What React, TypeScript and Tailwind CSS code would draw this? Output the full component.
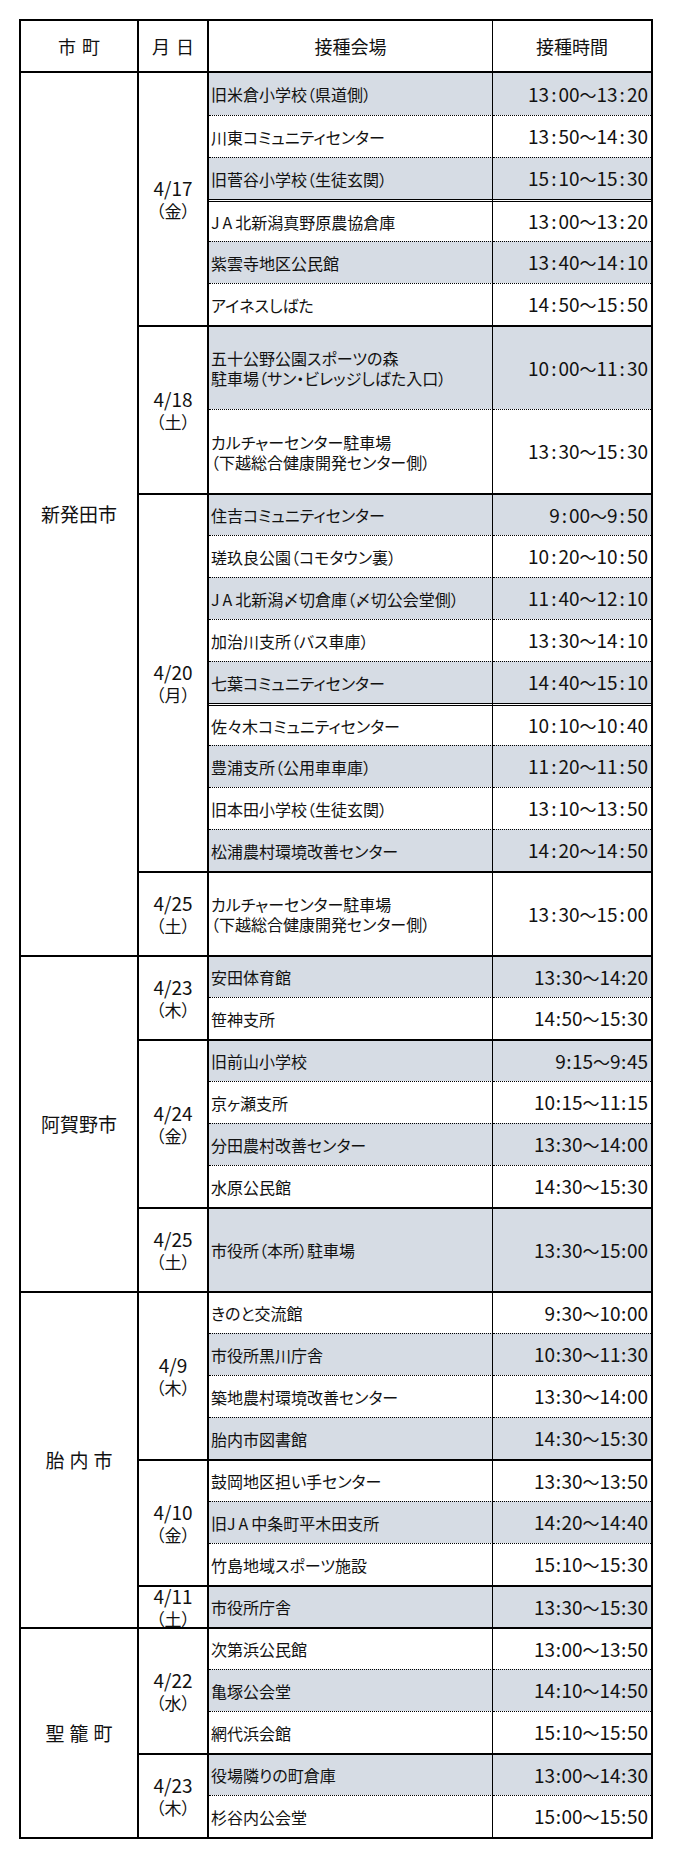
import React, { Fragment } from 'react';

type Row = { v: string[]; t: string; g: boolean; dbl?: boolean; span?: number };
type DateGroup = { d: string; w: string; rows: Row[] };
type City = { name: string[]; wide: boolean; dates: DateGroup[] };

const SPAN: Record<number, string> = {
  1: 'row-span-1',
  2: 'row-span-2',
  3: 'row-span-3',
  4: 'row-span-4',
  5: 'row-span-5',
  6: 'row-span-6',
  7: 'row-span-7',
  8: 'row-span-8',
  9: 'row-span-9',
  21: 'row-span-21',
};

const cities: City[] = [
  {
    name: ['新発田市'],
    wide: true,
    dates: [
      {
        d: '4/17',
        w: '金',
        rows: [
          { v: ['旧米倉小学校（県道側）'], t: '13:00~13:20', g: true },
          { v: ['川東コミュニティセンター'], t: '13:50~14:30', g: false },
          { v: ['旧菅谷小学校（生徒玄関）'], t: '15:10~15:30', g: true },
          { v: ['ＪＡ北新潟真野原農協倉庫'], t: '13:00~13:20', g: false, dbl: true },
          { v: ['紫雲寺地区公民館'], t: '13:40~14:10', g: true },
          { v: ['アイネスしばた'], t: '14:50~15:50', g: false },
        ],
      },
      {
        d: '4/18',
        w: '土',
        rows: [
          { v: ['五十公野公園スポーツの森', '駐車場（サン・ビレッジしばた入口）'], t: '10:00~11:30', g: true, span: 2 },
          { v: ['カルチャーセンター駐車場', '（下越総合健康開発センター側）'], t: '13:30~15:30', g: false, span: 2 },
        ],
      },
      {
        d: '4/20',
        w: '月',
        rows: [
          { v: ['住吉コミュニティセンター'], t: '9:00~9:50', g: true },
          { v: ['瑳玖良公園（コモタウン裏）'], t: '10:20~10:50', g: false },
          { v: ['ＪＡ北新潟〆切倉庫（〆切公会堂側）'], t: '11:40~12:10', g: true },
          { v: ['加治川支所（バス車庫）'], t: '13:30~14:10', g: false },
          { v: ['七葉コミュニティセンター'], t: '14:40~15:10', g: true },
          { v: ['佐々木コミュニティセンター'], t: '10:10~10:40', g: false, dbl: true },
          { v: ['豊浦支所（公用車車庫）'], t: '11:20~11:50', g: true },
          { v: ['旧本田小学校（生徒玄関）'], t: '13:10~13:50', g: false },
          { v: ['松浦農村環境改善センター'], t: '14:20~14:50', g: true },
        ],
      },
      {
        d: '4/25',
        w: '土',
        rows: [
          { v: ['カルチャーセンター駐車場', '（下越総合健康開発センター側）'], t: '13:30~15:00', g: false, span: 2 },
        ],
      },
    ],
  },
  {
    name: ['阿賀野市'],
    wide: false,
    dates: [
      {
        d: '4/23',
        w: '木',
        rows: [
          { v: ['安田体育館'], t: '13:30~14:20', g: true },
          { v: ['笹神支所'], t: '14:50~15:30', g: false },
        ],
      },
      {
        d: '4/24',
        w: '金',
        rows: [
          { v: ['旧前山小学校'], t: '9:15~9:45', g: true },
          { v: ['京ヶ瀬支所'], t: '10:15~11:15', g: false },
          { v: ['分田農村改善センター'], t: '13:30~14:00', g: true },
          { v: ['水原公民館'], t: '14:30~15:30', g: false },
        ],
      },
      {
        d: '4/25',
        w: '土',
        rows: [{ v: ['市役所（本所）駐車場'], t: '13:30~15:00', g: true, span: 2 }],
      },
    ],
  },
  {
    name: ['胎', '内', '市'],
    wide: false,
    dates: [
      {
        d: '4/9',
        w: '木',
        rows: [
          { v: ['きのと交流館'], t: '9:30~10:00', g: false },
          { v: ['市役所黒川庁舎'], t: '10:30~11:30', g: true },
          { v: ['築地農村環境改善センター'], t: '13:30~14:00', g: false },
          { v: ['胎内市図書館'], t: '14:30~15:30', g: true },
        ],
      },
      {
        d: '4/10',
        w: '金',
        rows: [
          { v: ['鼓岡地区担い手センター'], t: '13:30~13:50', g: false },
          { v: ['旧ＪＡ中条町平木田支所'], t: '14:20~14:40', g: true },
          { v: ['竹島地域スポーツ施設'], t: '15:10~15:30', g: false },
        ],
      },
      {
        d: '4/11',
        w: '土',
        rows: [{ v: ['市役所庁舎'], t: '13:30~15:30', g: true }],
      },
    ],
  },
  {
    name: ['聖', '籠', '町'],
    wide: false,
    dates: [
      {
        d: '4/22',
        w: '水',
        rows: [
          { v: ['次第浜公民館'], t: '13:00~13:50', g: false },
          { v: ['亀塚公会堂'], t: '14:10~14:50', g: true },
          { v: ['網代浜会館'], t: '15:10~15:50', g: false },
        ],
      },
      {
        d: '4/23',
        w: '木',
        rows: [
          { v: ['役場隣りの町倉庫'], t: '13:00~14:30', g: true },
          { v: ['杉谷内公会堂'], t: '15:00~15:50', g: false },
        ],
      },
    ],
  },
];

function Time({ t, wide }: { t: string; wide: boolean }) {
  const [a, b] = t.split('~');
  const colon = wide ? 'mx-[2px]' : 'mx-[0.5px]';
  const part = (s: string) => {
    const [h, m] = s.split(':');
    return (
      <>
        {h}
        <span className={colon}>:</span>
        {m}
      </>
    );
  };
  return (
    <span className="whitespace-nowrap">
      {part(a)}
      <span className="text-[17px]">～</span>
      {part(b)}
    </span>
  );
}

function Venue({ text }: { text: string }) {
  const parts = text.split('ＪＡ');
  return (
    <div>
      {parts.map((p, i) => (
        <Fragment key={i}>
          {i > 0 && <span className="tracking-[3px]">JA</span>}
          {p}
        </Fragment>
      ))}
    </div>
  );
}

export default function App() {
  return (
    <div className="w-[681px] min-h-[1856px] bg-white pt-[19px] pl-[19px] font-['Noto_Sans_CJK_JP',sans-serif] text-[#111]">
      <div className="w-[634px] border-2 border-black">
        <div className="grid grid-cols-[118px_70px_284px_158px] h-[52px] border-b-2 border-black text-[18px]">
          <div className="flex items-center justify-center gap-[6px] border-r-2 border-black">
            <span>市</span>
            <span>町</span>
          </div>
          <div className="flex items-center justify-center gap-[6px] border-r-2 border-black">
            <span>月</span>
            <span>日</span>
          </div>
          <div className="flex items-center justify-center border-r border-black">接種会場</div>
          <div className="flex items-center justify-center">接種時間</div>
        </div>
        <div className="grid grid-cols-[118px_70px_284px_158px] auto-rows-[42px]">
          {cities.map((c, ci) => {
            const units = c.dates.reduce(
              (a, d) => a + d.rows.reduce((b, r) => b + (r.span ?? 1), 0),
              0
            );
            return (
              <Fragment key={ci}>
                <div
                  className={`${SPAN[units]} flex items-center justify-center gap-[5px] border-r-2 border-black text-[19px] ${
                    ci > 0 ? 'border-t-2' : ''
                  }`}
                >
                  {c.name.map((n, ni) => (
                    <span key={ni}>{n}</span>
                  ))}
                </div>
                {c.dates.map((d, di) => {
                  const du = d.rows.reduce((b, r) => b + (r.span ?? 1), 0);
                  const sep = ci > 0 || di > 0;
                  return (
                    <Fragment key={di}>
                      <div
                        className={`${SPAN[du]} flex flex-col items-center justify-center gap-[3px] border-r-2 border-black [font-feature-settings:'palt'] ${
                          sep ? 'border-t-2' : ''
                        }`}
                      >
                        <div className="text-[19px] leading-[20px]">{d.d}</div>
                        <div className="text-[17px] leading-[20px]">{`（${d.w}）`}</div>
                      </div>
                      {d.rows.map((r, ri) => {
                        const top =
                          ri === 0
                            ? sep
                              ? 'border-t-2'
                              : ''
                            : r.dbl
                            ? 'border-t-[3px] [border-top-style:double]'
                            : 'border-t [border-top-style:dotted]';
                        const bg = r.g ? 'bg-[#d6dce4]' : 'bg-white';
                        const span = r.span === 2 ? 'row-span-2' : 'row-span-1';
                        return (
                          <Fragment key={ri}>
                            <div
                              className={`${span} ${top} ${bg} flex items-center border-r border-black pl-[2px] text-[16px] leading-[20px] whitespace-nowrap [font-feature-settings:'palt']`}
                            >
                              <div>
                                {r.v.map((l, li) => (
                                  <Venue key={li} text={l} />
                                ))}
                              </div>
                            </div>
                            <div
                              className={`${span} ${top} ${bg} flex items-center justify-end border-black pr-[3px] text-[19px]`}
                            >
                              <Time t={r.t} wide={c.wide} />
                            </div>
                          </Fragment>
                        );
                      })}
                    </Fragment>
                  );
                })}
              </Fragment>
            );
          })}
        </div>
      </div>
    </div>
  );
}
